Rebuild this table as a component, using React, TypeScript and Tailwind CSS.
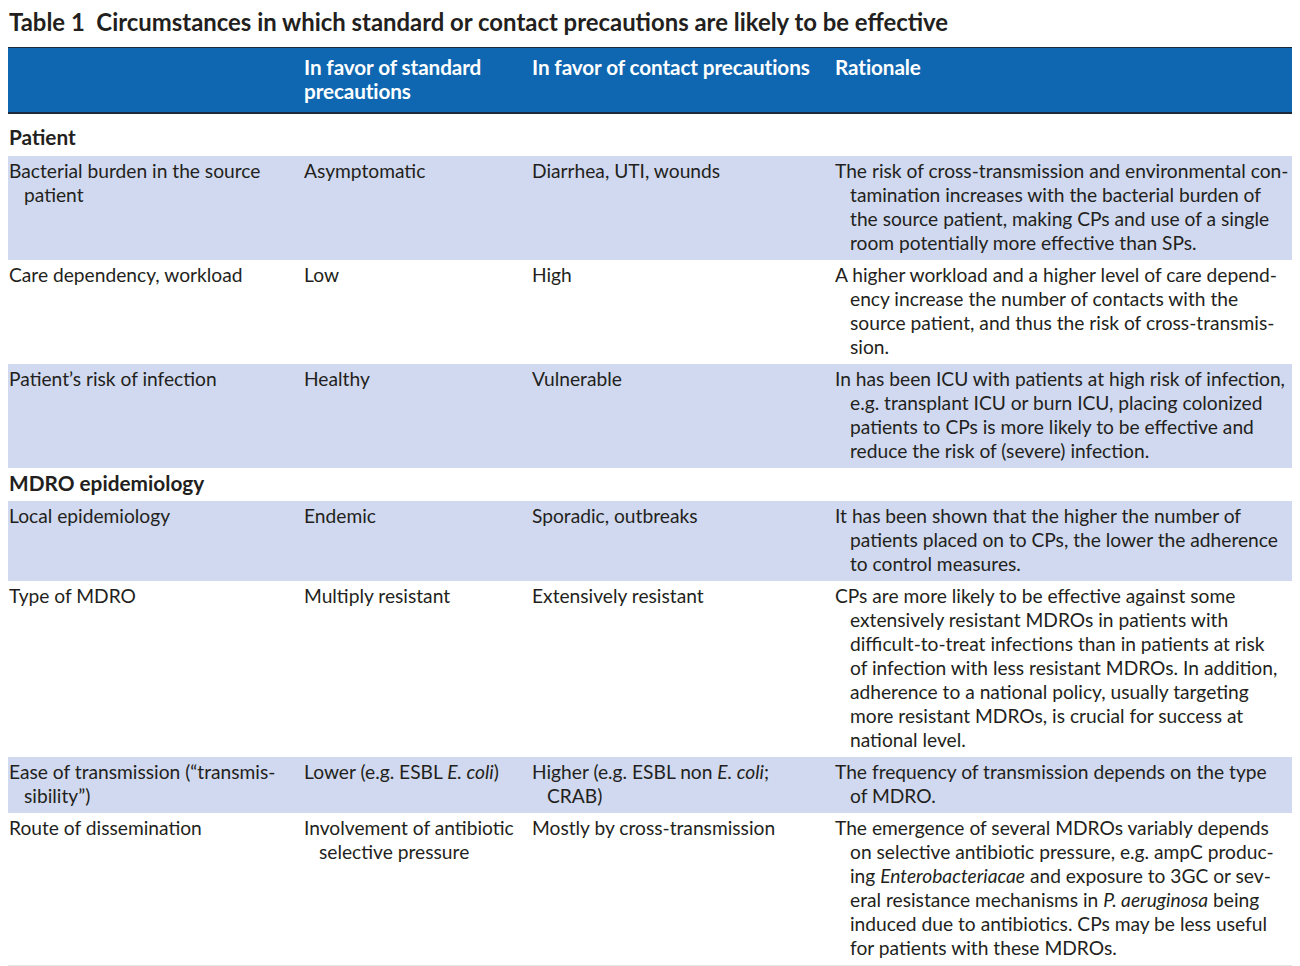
import type { ReactNode } from "react";

type Line = ReactNode;

interface TableRow {
  cells: Line[][];
  shaded: boolean;
}

interface Section {
  title: string;
  rows: TableRow[];
}

const sections: Section[] = [
  {
    title: "Patient",
    rows: [
      {
        shaded: true,
        cells: [
          ["Bacterial burden in the source", "patient"],
          ["Asymptomatic"],
          ["Diarrhea, UTI, wounds"],
          [
            "The risk of cross-transmission and environmental con-",
            "tamination increases with the bacterial burden of",
            "the source patient, making CPs and use of a single",
            "room potentially more effective than SPs.",
          ],
        ],
      },
      {
        shaded: false,
        cells: [
          ["Care dependency, workload"],
          ["Low"],
          ["High"],
          [
            "A higher workload and a higher level of care depend-",
            "ency increase the number of contacts with the",
            "source patient, and thus the risk of cross-transmis-",
            "sion.",
          ],
        ],
      },
      {
        shaded: true,
        cells: [
          ["Patient’s risk of infection"],
          ["Healthy"],
          ["Vulnerable"],
          [
            "In has been ICU with patients at high risk of infection,",
            "e.g. transplant ICU or burn ICU, placing colonized",
            "patients to CPs is more likely to be effective and",
            "reduce the risk of (severe) infection.",
          ],
        ],
      },
    ],
  },
  {
    title: "MDRO epidemiology",
    rows: [
      {
        shaded: true,
        cells: [
          ["Local epidemiology"],
          ["Endemic"],
          ["Sporadic, outbreaks"],
          [
            "It has been shown that the higher the number of",
            "patients placed on to CPs, the lower the adherence",
            "to control measures.",
          ],
        ],
      },
      {
        shaded: false,
        cells: [
          ["Type of MDRO"],
          ["Multiply resistant"],
          ["Extensively resistant"],
          [
            "CPs are more likely to be effective against some",
            "extensively resistant MDROs in patients with",
            "difficult-to-treat infections than in patients at risk",
            "of infection with less resistant MDROs. In addition,",
            "adherence to a national policy, usually targeting",
            "more resistant MDROs, is crucial for success at",
            "national level.",
          ],
        ],
      },
      {
        shaded: true,
        cells: [
          ["Ease of transmission (“transmis-", "sibility”)"],
          [
            <>
              Lower (e.g. ESBL <i>E. coli</i>)
            </>,
          ],
          [
            <>
              Higher (e.g. ESBL non <i>E. coli</i>;
            </>,
            "CRAB)",
          ],
          [
            "The frequency of transmission depends on the type",
            "of MDRO.",
          ],
        ],
      },
      {
        shaded: false,
        cells: [
          ["Route of dissemination"],
          ["Involvement of antibiotic", "selective pressure"],
          ["Mostly by cross-transmission"],
          [
            "The emergence of several MDROs variably depends",
            "on selective antibiotic pressure, e.g. ampC produc-",
            <>
              ing <i>Enterobacteriacae</i> and exposure to 3GC or sev-
            </>,
            <>
              eral resistance mechanisms in <i>P. aeruginosa</i> being
            </>,
            "induced due to antibiotics. CPs may be less useful",
            "for patients with these MDROs.",
          ],
        ],
      },
    ],
  },
];

const headers: Line[][] = [
  [],
  ["In favor of standard", "precautions"],
  ["In favor of contact precautions"],
  ["Rationale"],
];

function Cell({
  lines,
  first,
  hang = true,
}: {
  lines: Line[];
  first?: boolean;
  hang?: boolean;
}) {
  return (
    <div className={first ? "pl-px" : ""}>
      {lines.map((line, i) => (
        <div
          key={i}
          className={`whitespace-nowrap ${hang && i > 0 ? "pl-[15px]" : ""}`}
        >
          {line}
        </div>
      ))}
    </div>
  );
}

export default function App() {
  return (
    <div
      className="min-h-[966px] bg-white text-[#231f20]"
      style={{ fontFamily: "Lato, 'Open Sans', sans-serif" }}
    >
      <div className="px-[9px] pt-[7px] h-[47px] text-[23.9px] leading-[30px] font-bold whitespace-nowrap">
        Table 1&nbsp;&nbsp;Circumstances in which standard or contact precautions are likely to be effective
      </div>

      <div className="ml-[8px] w-[1284px] text-[19.2px] leading-[24px]">
        <div className="grid grid-cols-[296px_228px_303px_457px] bg-[#0f67b1] border-t border-b-2 border-[#1c2a3c] pt-[7px] pb-[9px] font-bold text-white text-[20.7px] tracking-[-0.1px]">
          {headers.map((h, i) => (
            <Cell key={i} lines={h} first={i === 0} hang={false} />
          ))}
        </div>

        {sections.map((section, si) => (
          <div key={section.title}>
            <div
              className={`pl-px font-bold text-[20.8px] ${
                si === 0 ? "pt-[11px] pb-[7px]" : "pt-[3px] pb-[6px]"
              }`}
            >
              {section.title}
            </div>
            {section.rows.map((row, ri) => (
              <div
                key={ri}
                className={`grid grid-cols-[296px_228px_303px_457px] pt-[3px] pb-[5px] ${
                  row.shaded ? "bg-[#d0d9ef]" : "bg-white"
                }`}
              >
                {row.cells.map((c, ci) => (
                  <Cell key={ci} lines={c} first={ci === 0} />
                ))}
              </div>
            ))}
          </div>
        ))}
        <div className="h-px bg-[#e4e6ea]" />
      </div>
    </div>
  );
}
